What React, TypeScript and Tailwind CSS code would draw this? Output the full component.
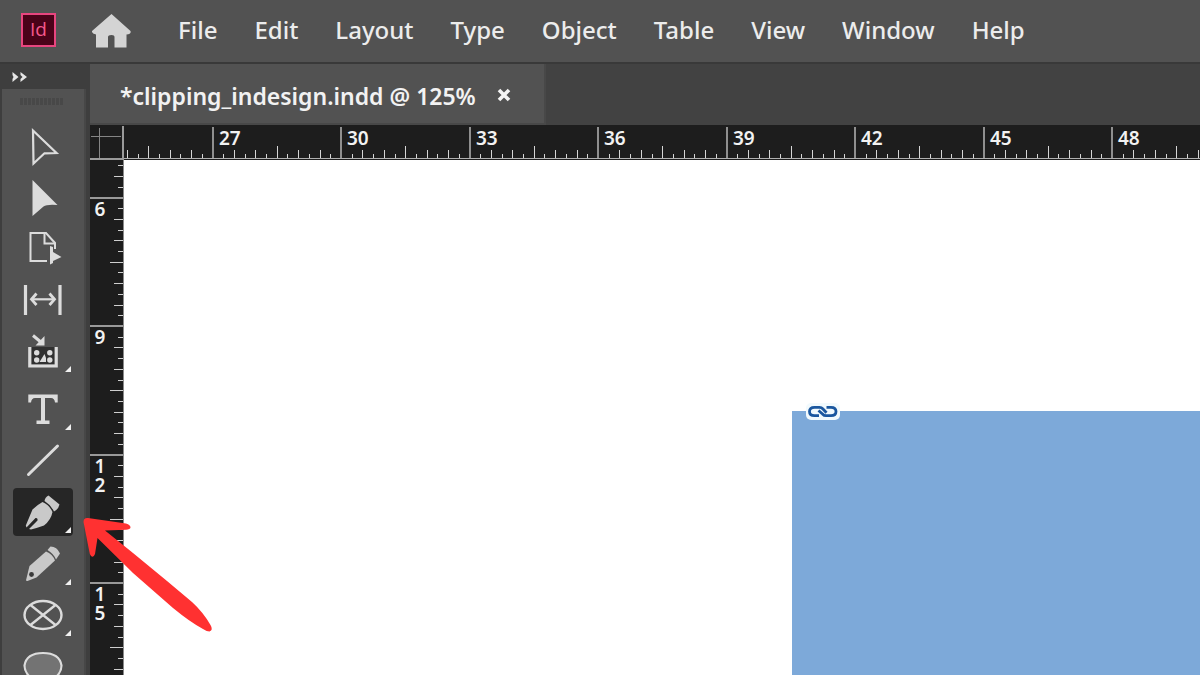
import React from "react";

const MENU = ["File", "Edit", "Layout", "Type", "Object", "Table", "View", "Window", "Help"];

const LIGHT = "#dcdcdc";
const STEP = 128.5;
const MINOR = STEP / 12;

function tickLength(i: number, full: number) {
  const k = ((i % 12) + 12) % 12;
  if (k === 0) return full;
  if (k === 6) return 13;
  return k % 2 === 0 ? 9 : 5;
}

function HorizontalRuler() {
  const origin = 89;
  const ticks = Array.from({ length: 240 }, (_, n) => n - 8);
  const labels = Array.from({ length: 8 }, (_, n) => n);
  return (
    <svg aria-label="Horizontal ruler" className="block h-[35px] min-w-0 flex-1" fill="none">
      {ticks.map((i) => {
        const major = i % 12 === 0;
        const x = Math.floor(origin + i * MINOR) + (major ? 0 : 0.5);
        return (
          <line
            key={i}
            x1={x}
            x2={x}
            y1={34 - tickLength(i, 32)}
            y2={34}
            stroke={major ? "#8f8f8f" : "#d6d6d6"}
            strokeWidth={major ? 2 : 1}
          />
        );
      })}
      <rect x="0" y="33" width="100%" height="1" fill="#b0b0b0" />
      {labels.map((n) => (
        <text
          key={n}
          x={Math.floor(origin + n * STEP) + 6}
          y="20"
          fill="#f2f2f2"
          className="text-[19px] font-semibold"
        >
          {27 + n * 3}
        </text>
      ))}
    </svg>
  );
}

function VerticalRuler() {
  const origin = 38;
  const ticks = Array.from({ length: 200 }, (_, n) => n - 3);
  const labels = Array.from({ length: 4 }, (_, n) => n);
  return (
    <svg aria-label="Vertical ruler" className="block h-full w-[34px] shrink-0 bg-[#1d1d1d]" fill="none">
      {ticks.map((i) => {
        const major = i % 12 === 0;
        const y = Math.floor(origin + i * MINOR) + (major ? 0 : 0.5);
        return (
          <line
            key={i}
            y1={y}
            y2={y}
            x1={33 - tickLength(i, 33)}
            x2={33}
            stroke={major ? "#999999" : "#cfcfcf"}
            strokeWidth={major ? 2 : 1}
          />
        );
      })}
      <rect x="33" y="0" width="1" height="100%" fill="#8a8a8a" />
      {labels.map((n) =>
        String(6 + n * 3)
          .split("")
          .map((digit, d) => (
            <text
              key={`${n}-${d}`}
              x="10"
              y={Math.floor(origin + n * STEP) + 18 + d * 19}
              textAnchor="middle"
              fill="#f2f2f2"
              className="text-[19px] font-semibold"
            >
              {digit}
            </text>
          )),
      )}
    </svg>
  );
}

function Corner({ y }: { y: number }) {
  return <path d={`M58 ${y} V${y + 6} H52 Z`} fill="#f0f0f0" />;
}

const TOOLS: { name: string; art: React.ReactNode }[] = [
  {
    name: "Selection tool",
    art: <path d="M20 6.500 L43.500 29 L31.500 29.300 L20.500 39.500 Z" stroke={LIGHT} strokeWidth="2.2" />,
  },
  {
    name: "Direct selection tool",
    art: <path d="M19.5 4 L44.5 29 Q34 28 30.5 30.5 L19.5 40 Z" fill={LIGHT} />,
  },
  {
    name: "Page tool",
    art: (
      <>
        <path d="M34 33 H17.5 V5 H33 L42 15 V21" stroke={LIGHT} strokeWidth="2" />
        <path d="M31.5 5 V15.5 H42" stroke={LIGHT} strokeWidth="2" />
        <path d="M37 18 L40 19 V24 L48.5 29 L40 33 V35 L37 36.5 Z" fill={LIGHT} />
      </>
    ),
  },
  {
    name: "Gap tool",
    art: (
      <>
        <path d="M12.5 5 V35 M47 5 V35" stroke={LIGHT} strokeWidth="3.2" />
        <path d="M19 19.3 H41" stroke={LIGHT} strokeWidth="2.2" />
        <path d="M23.5 13.5 L18.5 19.3 L23.5 25 M36.5 13.5 L41.5 19.3 L36.5 25" stroke={LIGHT} strokeWidth="2.8" />
      </>
    ),
  },
  {
    name: "Content collector tool",
    art: (
      <>
        <rect x="18" y="15" width="24" height="17" fill="#303030" />
        <path d="M16.8 15 V34 H43.2 V15" stroke={LIGHT} strokeWidth="3.2" />
        <g fill={LIGHT}>
          <circle cx="23.7" cy="20.800" r="2.700" />
          <circle cx="36.800" cy="20.800" r="2.700" />
          <circle cx="23.7" cy="28" r="2.700" />
          <circle cx="36.800" cy="28" r="2.700" />
          <path d="M26.500 30 L31.500 22 L33 26 V30 Z" />
        </g>
        <path d="M20 3.5 L29 11" stroke={LIGHT} strokeWidth="3" />
        <path d="M31.5 4 V13.5 H22.5 Z" fill={LIGHT} />
        <Corner y={34} />
      </>
    ),
  },
  {
    name: "Type tool",
    art: (
      <>
        <path d="M15.3 10.5 H44.7 V18.5 H42 Q41.5 14 38 14 H32 V36.5 H36.5 V40 H23.5 V36.5 H28 V14 H22 Q18.5 14 18 18.5 H15.3 Z" fill={LIGHT} />
        <Corner y={40} />
      </>
    ),
  },
  {
    name: "Line tool",
    art: <path d="M15.5 38.5 L44.5 10" stroke={LIGHT} strokeWidth="3" strokeLinecap="round" />,
  },
  {
    name: "Pen tool",
    art: (
      <>
        <path d="M35.5 7.5 L46.5 16.5 Q45.5 21 41 23.5 Q38 17 31.5 13 Q32 9 35.5 7.5 Z" fill="#c9c9c9" />
        <path d="M29.5 14 Q36.5 17 39.5 24 Q38 32 31 37.5 Q24 40 18 41.5 L16 41 L24.5 32.5 Q25 29.5 22.5 30 L13.5 39.5 L12.8 37.5 L19.5 21.5 Q24 17 29.5 14 Z" fill="#c9c9c9" />
        <Corner y={39} />
      </>
    ),
  },
  {
    name: "Pencil tool",
    art: (
      <>
        <path d="M37.5 6.5 Q44 6.5 47 13.5 L43 19.5 Q40.5 13.5 34.5 10 Z" fill="#c9c9c9" />
        <path d="M33 11.5 Q39.5 14 42 20.5 L23.5 37.5 L14.5 41 Q12.8 41.5 13.2 39.5 L16.5 26 Z" fill="#c9c9c9" />
        <circle cx="18.5" cy="34.5" r="2.4" fill="#3a3a3a" />
        <Corner y={39} />
      </>
    ),
  },
  {
    name: "Ellipse frame tool",
    art: (
      <>
        <ellipse cx="30" cy="23" rx="18.5" ry="14" stroke={LIGHT} strokeWidth="2.4" />
        <path d="M17.5 13 L42.5 33 M42.5 13 L17.5 33" stroke={LIGHT} strokeWidth="2.4" />
        <Corner y={38} />
      </>
    ),
  },
  {
    name: "Ellipse tool",
    art: (
      <path
        d="M17 33 Q11.500 28 11.500 21.500 Q13.500 9 30 9 Q46.500 9 48.500 21.500 Q48.500 28 43 33"
        fill="#737373"
        stroke={LIGHT}
        strokeWidth="2.2"
      />
    ),
  },
];

function Toolbar() {
  return (
    <aside className="flex w-[90px] shrink-0 flex-col bg-[#3e3e3e]">
      <div className="flex h-[25px] shrink-0 items-center pl-3">
        <button aria-label="Expand panel" className="flex">
          <svg className="h-3 w-4" viewBox="0 0 16 12">
            <path d="M0.5 1 L6.5 6 L0.5 11 V8 L1.500 6 L0.5 4 Z M8.5 1 L15 6 L8.5 11 V8 L10.5 6 L8.5 4 Z" fill="#e6e6e6" />
          </svg>
        </button>
      </div>
      <div className="mr-1 ml-0.5 flex min-h-0 flex-1 flex-col overflow-hidden border-r-2 border-[#474747] bg-[#525252]">
        <svg className="mt-[9px] ml-[18px] h-2 w-11 shrink-0" viewBox="0 0 44 8">
          {Array.from({ length: 11 }, (_, i) => (
            <rect key={i} x={i * 4} y="0" width="3" height="7" fill="#484848" />
          ))}
        </svg>
        <div className="mt-[18px] ml-[11px] flex flex-col items-start gap-1">
          {TOOLS.map((tool) => (
            <button
              key={tool.name}
              aria-label={tool.name}
              className={`h-12 w-[60px] shrink-0 rounded-sm ${tool.name === "Pen tool" ? "bg-[#262626]" : ""}`}
            >
              <svg className="block h-12 w-[60px]" viewBox="0 0 60 48" fill="none">
                {tool.art}
              </svg>
            </button>
          ))}
        </div>
      </div>
    </aside>
  );
}

function Canvas() {
  return (
    <div className="relative min-w-0 flex-1 overflow-hidden bg-white">
      <div className="absolute top-[251px] right-0 bottom-0 left-[668px] bg-[#7da9d9]" />
      <svg className="absolute top-[242px] left-[681px] h-[18px] w-9" viewBox="0 0 36 18" fill="none">
        <rect x="1" y="1" width="34" height="17" rx="5" fill="#f2fafd" />
        <path
          d="M14 13.700 H9.500 Q4.500 13.700 4.500 9.500 Q4.500 5.300 9.500 5.300 H14.500 Q16.500 5.300 18 7 L21.500 10.700"
          stroke="#1b579f"
          strokeWidth="2.8"
        />
        <path
          d="M21.500 5.300 H26 Q31 5.300 31 9.500 Q31 13.700 26 13.700 H21 Q19 13.700 17.500 12 L13.500 8.500"
          stroke="#1b579f"
          strokeWidth="2.8"
        />
      </svg>
    </div>
  );
}

export default function App() {
  return (
    <div className="relative flex h-screen flex-col overflow-hidden bg-[#424242] font-['Noto_Sans','Open_Sans',sans-serif] text-[#ececec]">
      <header className="flex h-[62px] shrink-0 items-center bg-[#525252] pl-5">
        <svg className="h-9 w-9 shrink-0" viewBox="0 0 36 36" aria-label="InDesign">
          <rect x="2" y="1" width="33" height="32" fill="#4a0219" stroke="#e8457f" strokeWidth="2" />
          <text x="18.5" y="23" textAnchor="middle" fill="#f5588c" className="font-['Open_Sans'] text-[19px] font-medium">
            Id
          </text>
        </svg>
        <button aria-label="Home" className="ml-9 shrink-0">
          <svg className="block h-9 w-10" viewBox="0 0 40 36">
            <path d="M19.5 1 L38.5 18 Q39.5 21 34.5 21.5 V34.5 H22.5 V24 Q22.5 22 19.5 22 Q16 22 16 24 V34.5 H4 V21.5 Q-0.5 20.5 0 18 Z" fill="#d4d4d4" />
          </svg>
        </button>
        <nav className="mb-0.5 ml-[46px] flex items-center gap-[37px] text-[24px] leading-8 font-medium">
          {MENU.map((item) => (
            <button key={item}>{item}</button>
          ))}
        </nav>
      </header>

      <div className="flex min-h-0 flex-1 border-t-2 border-[#393939]">
        <Toolbar />
        <main className="flex min-w-0 flex-1 flex-col">
          <div className="flex h-[61px] shrink-0">
            <div className="flex items-center gap-5 border-r-2 border-b-2 border-[#484848] bg-[#525252] pt-1 pr-8 pl-[30px]">
              <span className="text-[23px] leading-8 font-semibold whitespace-nowrap text-[#f2f2f2]">
                *clipping_indesign.indd @ 125%
              </span>
              <button aria-label="Close tab">
                <svg className="block h-4 w-4" viewBox="0 0 16 16">
                  <path d="M3 2 L13 12 M13 2 L3 12" stroke="#f5f5f5" strokeWidth="3.6" />
                </svg>
              </button>
            </div>
          </div>
          <div className="flex h-[35px] shrink-0 bg-[#1d1d1d]">
            <svg className="block h-[35px] w-[34px] shrink-0" viewBox="0 0 34 35">
              <path d="M9.5 3 V33 M1 11.5 H31" stroke="#858585" strokeWidth="1" />
              <path d="M33 1 V34 M0 34 H34" stroke="#9a9a9a" strokeWidth="2" />
            </svg>
            <HorizontalRuler />
          </div>
          <div className="flex min-h-0 flex-1">
            <VerticalRuler />
            <Canvas />
          </div>
        </main>
      </div>

      <svg
        className="pointer-events-none absolute top-[514px] left-[80px] h-[122px] w-[136px]"
        viewBox="80 514 136 122"
        aria-hidden="true"
      >
        <path
          d="M88 518 L126 523.500 Q130.500 525 130.500 527.500 Q130 529.500 126 529.800 L105 530.500 L133 553 L167 581 L192 602 Q203 612 210.500 625 Q213.500 630 209.500 631.500 Q207 631.500 203 629 Q190 622 173 608 L133 573 L97.500 538 L95 554 Q93.500 558 91 556 Q89.500 554 89 550 L83.500 522 Q83.500 517.500 88 518 Z"
          fill="#ff3131"
        />
      </svg>
    </div>
  );
}
